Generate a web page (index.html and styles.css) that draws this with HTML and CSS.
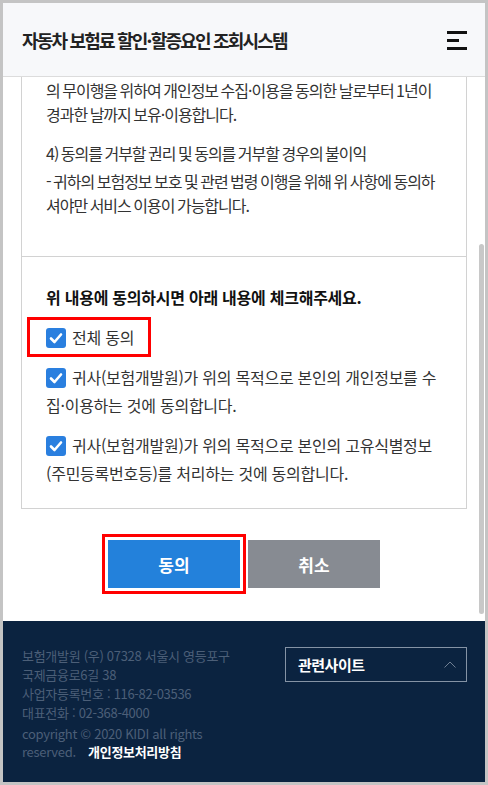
FILE: index.html
```html
<!DOCTYPE html>
<html lang="ko">

<head>
    <meta charset="UTF-8">
    <meta name="viewport" content="width=device-width, initial-scale=1.0">
    <title>자동차 보험료 할인·할증요인 조회시스템</title>
<link rel="stylesheet" href="styles.css">
</head>

<body>
    <div class="page">
        <header class="top-bar">
            <h1 class="top-title">자동차 보험료 할인·할증요인 조회시스템</h1>
            <a class="menu-btn" href="#">
                <span></span>
                <span class="short"></span>
                <span></span>
            </a>
        </header>

        <main class="agree">
            <div class="agree-box">
                <div class="agree-text">
                    <p>의 무이행을 위하여 개인정보 수집·이용을 동의한 날로부터 1년이<br>경과한 날까지 보유·이용합니다.</p>
                    <p class="agree-sub">4) 동의를 거부할 권리 및 동의를 거부할 경우의 불이익</p>
                    <p class="agree-desc">- 귀하의 보험정보 보호 및 관련 법령 이행을 위해 위 사항에 동의하<br>셔야만 서비스 이용이 가능합니다.</p>
                </div>

                <div class="agree-check">
                    <p class="agree-title">위 내용에 동의하시면 아래 내용에 체크해주세요.</p>
                    <div class="check-item">
                        <label class="check-label mark">
                            <svg class="check-icon" viewBox="0 0 20 20"><rect width="20" height="20" rx="3"/><polyline points="5,10.5 8.5,14 15,6.5"/></svg>전체 동의
                        </label>
                    </div>
                    <div class="check-item">
                        <label class="check-label">
                            <svg class="check-icon" viewBox="0 0 20 20"><rect width="20" height="20" rx="3"/><polyline points="5,10.5 8.5,14 15,6.5"/></svg>귀사(보험개발원)가 위의 목적으로 본인의 개인정보를 수<br>집·이용하는 것에 동의합니다.
                        </label>
                    </div>
                    <div class="check-item">
                        <label class="check-label">
                            <svg class="check-icon" viewBox="0 0 20 20"><rect width="20" height="20" rx="3"/><polyline points="5,10.5 8.5,14 15,6.5"/></svg>귀사(보험개발원)가 위의 목적으로 본인의 고유식별정보<br>(주민등록번호등)를 처리하는 것에 동의합니다.
                        </label>
                    </div>
                </div>
            </div>

            <div class="btn-row">
                <a class="btn btn-ok mark-btn" href="#">동의</a>
                <a class="btn btn-cancel" href="#">취소</a>
            </div>
        </main>

        <footer class="footer">
            <div class="footer-info">
                <p>보험개발원 (우) 07328 서울시 영등포구<br>국제금융로6길 38</p>
                <p>사업자등록번호 : 116-82-03536</p>
                <p>대표전화 : 02-368-4000</p>
                <p class="copy">copyright &copy; 2020 KIDI all rights<br>reserved. <a href="#">개인정보처리방침</a></p>
            </div>
            <div class="site-select">
                <span>관련사이트</span>
                <svg class="chev" viewBox="0 0 12 7"><polyline points="0.5,6.5 6,1 11.5,6.5"/></svg>
            </div>
        </footer>

        <div class="scroll-thumb"></div>
    </div>
</body>

</html>
```

FILE: styles.css
```css
* {
  box-sizing: border-box;
}

body {
  margin: 0;
  padding: 3px;
  background-color: #c4c4c4;
  font-family: "Noto Sans CJK KR", "Noto Sans", sans-serif;
  color: #333;
}

p {
  margin: 0;
}

a {
  text-decoration: none;
}

.page {
  position: relative;
  display: flex;
  flex-direction: column;
  width: 482px;
  height: 779px;
  background-color: #fff;
  overflow: hidden;
}

/* header */
.top-bar {
  display: flex;
  align-items: center;
  justify-content: space-between;
  height: 74px;
  padding: 0 18px 0 19px;
  background-color: #f7f8fa;
  border-bottom: 1px solid #dcdcdc;
}

.top-title {
  margin: 0;
  font-size: 18px;
  font-weight: 700;
  letter-spacing: -1.8px;
  color: #222;
}

.menu-btn {
  display: flex;
  flex-direction: column;
  gap: 5px;
  width: 20px;
  margin-top: 1px;
}

.menu-btn span {
  display: block;
  width: 20px;
  height: 3px;
  background-color: #111;
}

.menu-btn span.short {
  width: 12px;
}

/* agree box */
.agree {
  flex: 1;
  padding: 0 18px;
}

.agree-box {
  border: 1px solid #d2d2d2;
  border-top: none;
}

.agree-text {
  padding: 1px 20px 39px 24px;
  font-size: 16px;
  line-height: 24px;
  letter-spacing: -1px;
  word-spacing: -1px;
}

.agree-sub {
  margin-top: 15px;
}

.agree-desc {
  margin-top: 4px;
}

.agree-check {
  padding: 28px 20px 21px 24px;
  border-top: 1px solid #d2d2d2;
}

.agree-title {
  font-size: 16px;
  font-weight: 700;
  line-height: 24px;
  letter-spacing: -0.25px;
  color: #111;
}

.check-item {
  margin-top: 14px;
  font-size: 16px;
  line-height: 28px;
  letter-spacing: -0.25px;
}

.check-item + .check-item {
  margin-top: 12px;
}

.check-label {
  cursor: pointer;
}

.check-icon {
  width: 20px;
  height: 20px;
  margin-right: 6px;
  vertical-align: -4px;
}

.check-icon rect {
  fill: #2a7fdf;
}

.check-icon polyline {
  fill: none;
  stroke: #fff;
  stroke-width: 2.6;
  stroke-linecap: round;
  stroke-linejoin: round;
}

.mark {
  display: inline-block;
  padding: 0 11px 0 13px;
  margin: 0 -11px 0 -13px;
  outline: 3px solid #f00;
  outline-offset: 3px;
}

/* buttons */
.btn-row {
  display: flex;
  justify-content: center;
  gap: 8px;
  margin-top: 31px;
}

.btn {
  display: flex;
  align-items: center;
  justify-content: center;
  width: 132px;
  height: 48px;
  font-size: 17px;
  font-weight: 700;
  color: #fff;
}

.btn-ok {
  background-color: #2381db;
}

.btn-cancel {
  background-color: #878b92;
}

.mark-btn {
  outline: 3px solid #f00;
  outline-offset: 3px;
}

/* footer */
.footer {
  display: flex;
  justify-content: space-between;
  height: 161px;
  padding: 25px 18px 0 19px;
  background-color: #0b2340;
}

.footer-info {
  width: 240px;
  font-size: 13px;
  line-height: 19px;
  letter-spacing: -0.3px;
  color: #4c5f78;
}

.footer-info .copy {
  margin-top: 3px;
  line-height: 18px;
}

.footer-info a {
  margin-left: 9px;
  font-weight: 700;
  color: #fff;
}

.site-select {
  display: flex;
  align-items: center;
  justify-content: space-between;
  width: 182px;
  height: 35px;
  margin-top: 1px;
  padding: 0 10px 0 12px;
  border: 1px solid #8593a5;
  font-size: 15px;
  font-weight: 700;
  letter-spacing: -0.5px;
  color: #fff;
}

.chev {
  width: 12px;
  height: 7px;
}

.chev polyline {
  fill: none;
  stroke: #6f7f93;
  stroke-width: 1;
}

.scroll-thumb {
  position: absolute;
  top: 241px;
  right: 1px;
  width: 5px;
  height: 370px;
  border-radius: 3px;
  background-color: #c8c8c8;
}
```
